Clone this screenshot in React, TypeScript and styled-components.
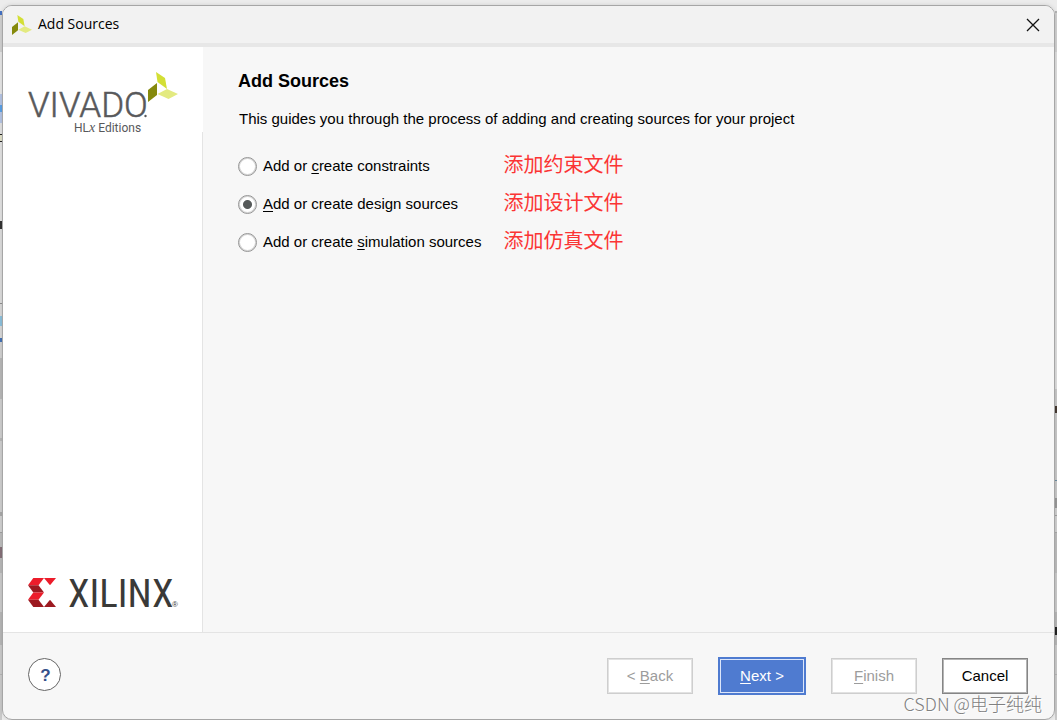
import React, { useState } from "react";
import styled, { createGlobalStyle } from "styled-components";

const GlobalStyle = createGlobalStyle`
  *, *::before, *::after { box-sizing: border-box; }
  body {
    margin: 0;
    background: #ececec;
    font-family: "Liberation Sans", Arial, sans-serif;
    font-size: 15px;
    line-height: 20px;
    color: #000;
  }
  u { text-underline-offset: 2px; }
`;

const leftEdge = `linear-gradient(
  #ececec 11px, #4472c4 11px 15px, #d0d0d0 15px 52px, #e6e6e6 52px 94px,
  #b4c4e4 94px 105px, #5aa0e6 105px 112px, #b4c4e4 112px 123px, #e2e2e2 123px 134px,
  #222 134px 135px, #e0e0c8 135px 141px, #222 141px 142px, #e2e2e2 142px 221px,
  #333 221px 229px, #dcdcdc 229px 303px, #8e8e8e 303px 304px, #d8d8d8 304px 316px,
  #8cc0dc 316px 326px, #d8d8d8 326px 338px, #4472b4 338px 342px, #d0d0d0 342px 358px,
  #b8b8b8 358px 399px, #cecece 399px 438px, #b8b8b8 438px 441px, #cecece 441px 512px,
  #a8a8a8 512px 516px, #d0d0d0 516px 532px, #a0a0a0 532px 533px, #bcbcbc 533px 547px,
  #857078 547px 558px, #b8b8b8 558px 573px, #cacaca 573px 612px, #b6b6b6 612px 645px,
  #cacaca 645px 674px, #b4b4b4 674px 675px, #cacaca 675px)`;

const rightEdge = `linear-gradient(
  #ececec 11px, #b4b4b4 11px 13px, #d0d0d0 13px 52px, #dedede 52px 389px,
  #c8c8c8 389px 406px, #443830 406px 413px, #c8c8c8 413px 480px, #6c8ca0 480px 481px,
  #c8c8c8 481px 498px, #989898 498px 508px, #cecece 508px 515px, #a0a0a0 515px 516px,
  #d0d0d0 516px 532px, #a8a8a8 532px 533px, #bcbcbc 533px 573px, #cacaca 573px 612px,
  #b6b6b6 612px 627px, #222 627px 635px, #b6b6b6 635px 645px, #cacaca 645px 674px,
  #b4b4b4 674px 675px, #cacaca 675px)`;

const Desktop = styled.div`
  display: flex;
  min-height: 100vh;
  padding: 5px 2px 0;
  background:
    ${leftEdge} left top / 2px 100% no-repeat,
    ${rightEdge} right top / 2px 100% no-repeat,
    #ececec;
`;

const Dialog = styled.section`
  position: relative;
  flex: 1;
  display: flex;
  flex-direction: column;
  border: 1px solid #a6a6a6;
  border-radius: 10px;
  background: #f7f7f7;
  overflow: hidden;
  box-shadow: 0 0 4px rgba(0, 0, 0, 0.12);
`;

const TitleBar = styled.header`
  display: flex;
  align-items: center;
  gap: 6px;
  height: 41px;
  padding: 0 8px 0 9px;
  background: #f2f2f2;
  border-bottom: 4px solid #e7e7e7;
`;

const WindowTitle = styled.span`
  flex: 1;
  padding-bottom: 1px;
  font-family: "Open Sans", "Noto Sans", sans-serif;
  font-size: 14px;
`;

const CloseButton = styled.button`
  display: flex;
  padding: 6px;
  border: 0;
  background: none;
`;

const Content = styled.div`
  flex: 1;
  display: grid;
  grid-template-columns: 200px 1fr;
  border-bottom: 1px solid #e4e4e4;
`;

const Sidebar = styled.aside`
  display: flex;
  flex-direction: column;
  background: #fff;
`;

const SidebarFill = styled.div`
  flex: 1;
  display: flex;
  align-items: flex-end;
  padding: 0 0 12px 24px;
  border-right: 1px solid #e4e4e4;
`;

const ProductLogo = styled.div`
  height: 85px;
  padding: 24px 0 0 24px;
`;

const Main = styled.main`
  padding: 24px 35px;
`;

const Heading = styled.h1`
  margin: 0 0 18px;
  font-size: 18px;
  line-height: 20px;
`;

const Intro = styled.p`
  margin: 0 0 25px 1px;
`;

const Options = styled.div`
  display: grid;
  grid-template-columns: max-content max-content;
  align-items: center;
  column-gap: 22px;
  row-gap: 14px;
`;

const Option = styled.label`
  display: flex;
  align-items: center;
  gap: 6px;
`;

const Radio = styled.input`
  appearance: none;
  width: 19px;
  height: 19px;
  margin: 0;
  border: 1px solid #949494;
  border-radius: 50%;
  background: #fff;
  box-shadow: inset 0 0 0 1px #d4d4d4;

  &:checked {
    background: radial-gradient(circle, #565a5a 4px, #fff 5px);
  }
`;

const Note = styled.span`
  padding-bottom: 4px;
  font-family: "Noto Sans CJK SC", sans-serif;
  font-size: 20px;
  line-height: 20px;
  color: #fb3434;
`;

const Footer = styled.footer`
  display: flex;
  align-items: flex-start;
  height: 86px;
  padding: 24px 26px 24px 25px;
`;

const HelpButton = styled.button`
  width: 33px;
  height: 33px;
  margin: 1px auto 0 0;
  padding: 2px 0 0 2px;
  border: 1px solid #666;
  border-radius: 50%;
  background: #fff;
  font: bold 17px "Liberation Sans", Arial, sans-serif;
  color: #34508a;
`;

const Actions = styled.div`
  display: flex;
  align-items: center;
  gap: 25px;
`;

const ActionButton = styled.button<{ $primary?: boolean }>`
  width: ${(p) => (p.$primary ? 88 : 86)}px;
  height: ${(p) => (p.$primary ? 38 : 36)}px;
  padding: 0 0 2px;
  border: ${(p) => (p.$primary ? "2px solid #4f7bd0" : "1px solid #858585")};
  background: ${(p) => (p.$primary ? "#4f7bd0" : "#fff")};
  box-shadow: inset 0 0 0 1px ${(p) => (p.$primary ? "#dce6fa" : "#b4b4b4")};
  color: ${(p) => (p.$primary ? "#fff" : "#000")};
  font: 15px "Liberation Sans", Arial, sans-serif;

  &:disabled {
    border-color: #cecece;
    box-shadow: inset 0 0 0 1px #e2e2e2;
    color: #9c9c9c;
  }
`;

const Watermark = styled.span`
  position: absolute;
  right: 12px;
  bottom: 6px;
  font-family: "Noto Sans CJK SC", sans-serif;
  font-weight: 300;
  font-size: 18px;
  color: #808080;
  text-shadow: 1px 1px 0 #fff;
  pointer-events: none;
`;

const Leaves = ({ x = 0, y = 0, size }: { x?: number; y?: number; size: number }) => (
  <svg x={x} y={y} width={size} height={size} viewBox="0 0 30 30" aria-hidden="true">
    <path d="M8 0 17 6 19 17 9.5 10Z" fill="#d3df35" />
    <path d="M9 11 9 23 0 30 0 18Z" fill="#858a0c" />
    <path d="M9.5 22 19 17 30 22 20.5 27Z" fill="#e3ea80" />
  </svg>
);

const Vivado = () => (
  <svg width="154" height="68" viewBox="0 0 154 68" role="img" aria-label="Vivado HLx Editions">
    <text x="1" y="46" fontFamily="Roboto" fontWeight="300" fontSize="35" fill="#58595b" stroke="#58595b" strokeWidth="0.5">VIVADO</text>
    <circle cx="118.500" cy="45" r="1.200" fill="#58595b" />
    <text x="47" y="61" fontFamily="Roboto" fontSize="12" fill="#58595b">
      HL<tspan fontFamily="Liberation Serif" fontStyle="italic" fontSize="14">x</tspan> Editions
    </text>
    <Leaves x={121} y={1} size={30} />
  </svg>
);

const Xilinx = () => (
  <svg width="160" height="48" viewBox="0 0 160 48" role="img" aria-label="Xilinx">
    <path d="M6.300 6H17L11.500 13.300H1Z" fill="#ec1c2a" />
    <path d="M17 6H29L23 13.300Z" fill="#ec1c2a" />
    <path d="M1 13.300H11.500L17 20.500H6.300Z" fill="#9c1920" />
    <path d="M6.300 20.500H17L11.500 27.700H1Z" fill="#ec1c2a" />
    <path d="M1 27.700H11.500L17 35H6.300Z" fill="#9c1920" />
    <path d="M23 27.700 29 35H17Z" fill="#9c1920" />
    <text x="41" y="35" fontFamily="Roboto Condensed, Roboto" fontSize="39" fill="#3a3a38">XILINX</text>
    <text x="145" y="35" fontFamily="Liberation Sans" fontSize="8" fill="#3a3a38">®</text>
  </svg>
);

const sources = [
  { id: "constraints", label: <>Add or <u>c</u>reate constraints</>, note: "添加约束文件" },
  { id: "design", label: <><u>A</u>dd or create design sources</>, note: "添加设计文件" },
  { id: "simulation", label: <>Add or create <u>s</u>imulation sources</>, note: "添加仿真文件" },
];

export default function App() {
  const [selected, setSelected] = useState("design");
  return (
    <>
      <GlobalStyle />
      <Desktop>
        <Dialog role="dialog" aria-label="Add Sources">
          <TitleBar>
            <Leaves size={20} />
            <WindowTitle>Add Sources</WindowTitle>
            <CloseButton aria-label="Close">
              <svg width="14" height="14" viewBox="0 0 14 14" stroke="#111" strokeWidth="1.3">
                <path d="M1 1 13 13M13 1 1 13" />
              </svg>
            </CloseButton>
          </TitleBar>
          <Content>
            <Sidebar>
              <ProductLogo><Vivado /></ProductLogo>
              <SidebarFill><Xilinx /></SidebarFill>
            </Sidebar>
            <Main>
              <Heading>Add Sources</Heading>
              <Intro>This guides you through the process of adding and creating sources for your project</Intro>
              <Options role="radiogroup" aria-label="Source type">
                {sources.map((s) => (
                  <React.Fragment key={s.id}>
                    <Option>
                      <Radio
                        type="radio"
                        name="source"
                        checked={selected === s.id}
                        onChange={() => setSelected(s.id)}
                      />
                      <span>{s.label}</span>
                    </Option>
                    <Note>{s.note}</Note>
                  </React.Fragment>
                ))}
              </Options>
            </Main>
          </Content>
          <Footer>
            <HelpButton aria-label="Help">?</HelpButton>
            <Actions>
              <ActionButton disabled>&lt; <u>B</u>ack</ActionButton>
              <ActionButton $primary><u>N</u>ext &gt;</ActionButton>
              <ActionButton disabled><u>F</u>inish</ActionButton>
              <ActionButton>Cancel</ActionButton>
            </Actions>
          </Footer>
          <Watermark>CSDN @电子纯纯</Watermark>
        </Dialog>
      </Desktop>
    </>
  );
}
